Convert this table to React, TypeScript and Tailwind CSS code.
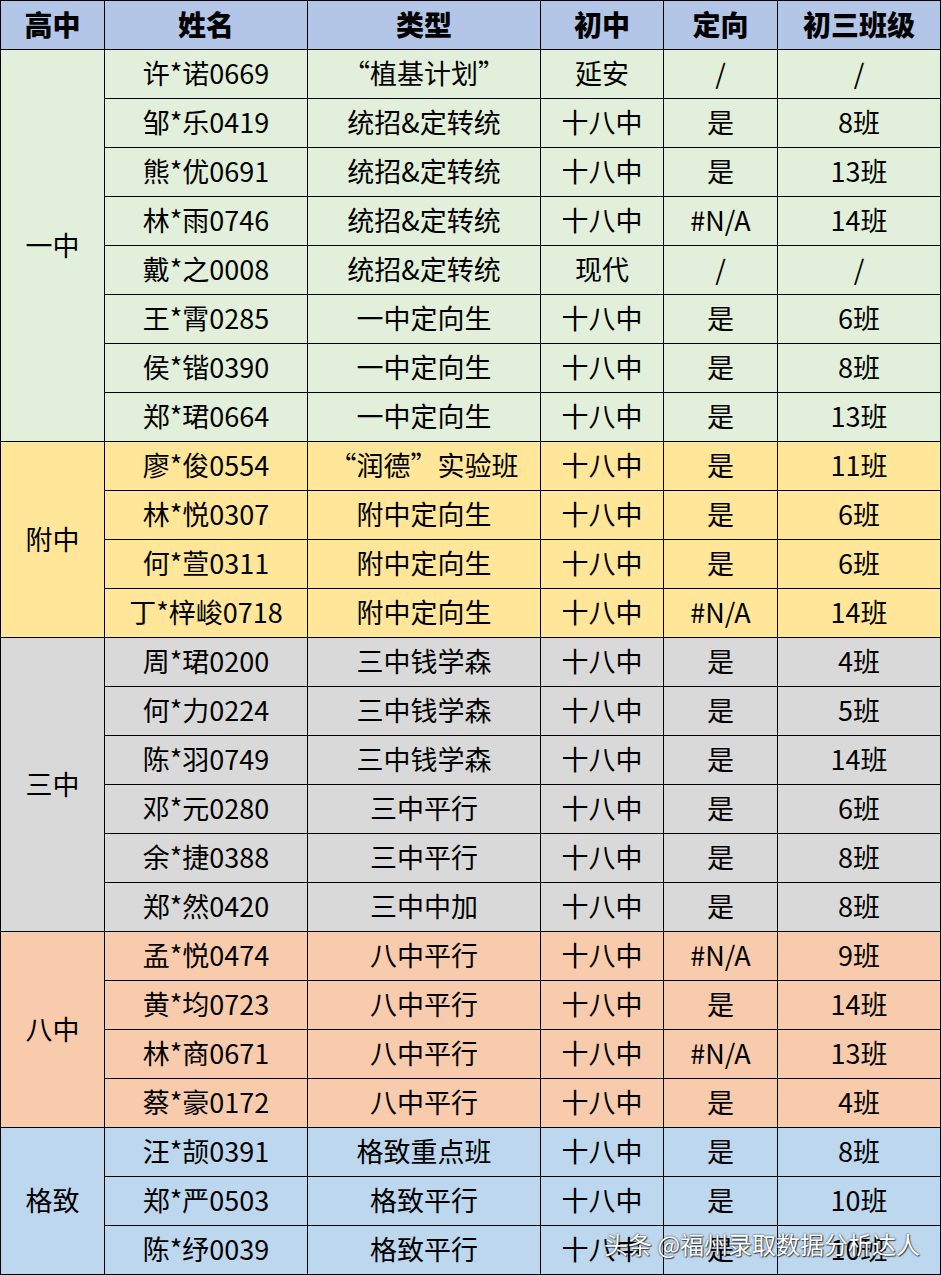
import React from 'react';

type Row = [string, string, string, string, string];

const groups: { name: string; bg: string; rows: Row[] }[] = [
  {
    name: '一中',
    bg: 'bg-[#e2efda]',
    rows: [
      ['许*诺0669', '“植基计划”', '延安', '/', '/'],
      ['邹*乐0419', '统招&定转统', '十八中', '是', '8班'],
      ['熊*优0691', '统招&定转统', '十八中', '是', '13班'],
      ['林*雨0746', '统招&定转统', '十八中', '#N/A', '14班'],
      ['戴*之0008', '统招&定转统', '现代', '/', '/'],
      ['王*霄0285', '一中定向生', '十八中', '是', '6班'],
      ['侯*锴0390', '一中定向生', '十八中', '是', '8班'],
      ['郑*珺0664', '一中定向生', '十八中', '是', '13班'],
    ],
  },
  {
    name: '附中',
    bg: 'bg-[#ffe699]',
    rows: [
      ['廖*俊0554', '“润德”实验班', '十八中', '是', '11班'],
      ['林*悦0307', '附中定向生', '十八中', '是', '6班'],
      ['何*萱0311', '附中定向生', '十八中', '是', '6班'],
      ['丁*梓峻0718', '附中定向生', '十八中', '#N/A', '14班'],
    ],
  },
  {
    name: '三中',
    bg: 'bg-[#d9d9d9]',
    rows: [
      ['周*珺0200', '三中钱学森', '十八中', '是', '4班'],
      ['何*力0224', '三中钱学森', '十八中', '是', '5班'],
      ['陈*羽0749', '三中钱学森', '十八中', '是', '14班'],
      ['邓*元0280', '三中平行', '十八中', '是', '6班'],
      ['余*捷0388', '三中平行', '十八中', '是', '8班'],
      ['郑*然0420', '三中中加', '十八中', '是', '8班'],
    ],
  },
  {
    name: '八中',
    bg: 'bg-[#f8cbad]',
    rows: [
      ['孟*悦0474', '八中平行', '十八中', '#N/A', '9班'],
      ['黄*均0723', '八中平行', '十八中', '是', '14班'],
      ['林*商0671', '八中平行', '十八中', '#N/A', '13班'],
      ['蔡*豪0172', '八中平行', '十八中', '是', '4班'],
    ],
  },
  {
    name: '格致',
    bg: 'bg-[#bdd7ee]',
    rows: [
      ['汪*颉0391', '格致重点班', '十八中', '是', '8班'],
      ['郑*严0503', '格致平行', '十八中', '是', '10班'],
      ['陈*纾0039', '格致平行', '十八中', '是', '10班'],
    ],
  },
];

const headers = ['高中', '姓名', '类型', '初中', '定向', '初三班级'];
const widths = ['w-[104px]', 'w-[203px]', 'w-[233px]', 'w-[123px]', 'w-[114px]', 'w-[163px]'];

const cell = 'border border-black text-center align-middle p-0 pb-[3px] leading-none';

export default function App() {
  return (
    <div
      className="relative w-[941px] h-[1275px] bg-white overflow-hidden text-black"
      style={{ fontFamily: '"Noto Sans CJK SC", "Noto Sans", sans-serif' }}
    >
      <table className="table-fixed border-collapse w-[940px] text-[27px]">
        <colgroup>
          {widths.map((w, i) => (
            <col key={i} className={w} />
          ))}
        </colgroup>
        <thead>
          <tr className="h-[49px] bg-[#b4c6e7]">
            {headers.map((h) => (
              <th key={h} className={`${cell} font-black text-[28px]`}>
                {h}
              </th>
            ))}
          </tr>
        </thead>
        <tbody>
          {groups.map((g) =>
            g.rows.map((r, i) => (
              <tr key={g.name + i} className={`h-[49px] ${g.bg}`}>
                {i === 0 && (
                  <td rowSpan={g.rows.length} className={cell}>
                    {g.name}
                  </td>
                )}
                {r.map((v, j) => (
                  <td key={j} className={cell}>
                    {v}
                  </td>
                ))}
              </tr>
            ))
          )}
        </tbody>
      </table>
      <div className="absolute left-[604px] top-[1226px] text-[24px] text-white whitespace-nowrap [text-shadow:0_0_2px_rgba(0,0,0,0.8),1px_1px_1px_rgba(0,0,0,0.6)]">
        头条 @福州录取数据分析达人
      </div>
    </div>
  );
}
